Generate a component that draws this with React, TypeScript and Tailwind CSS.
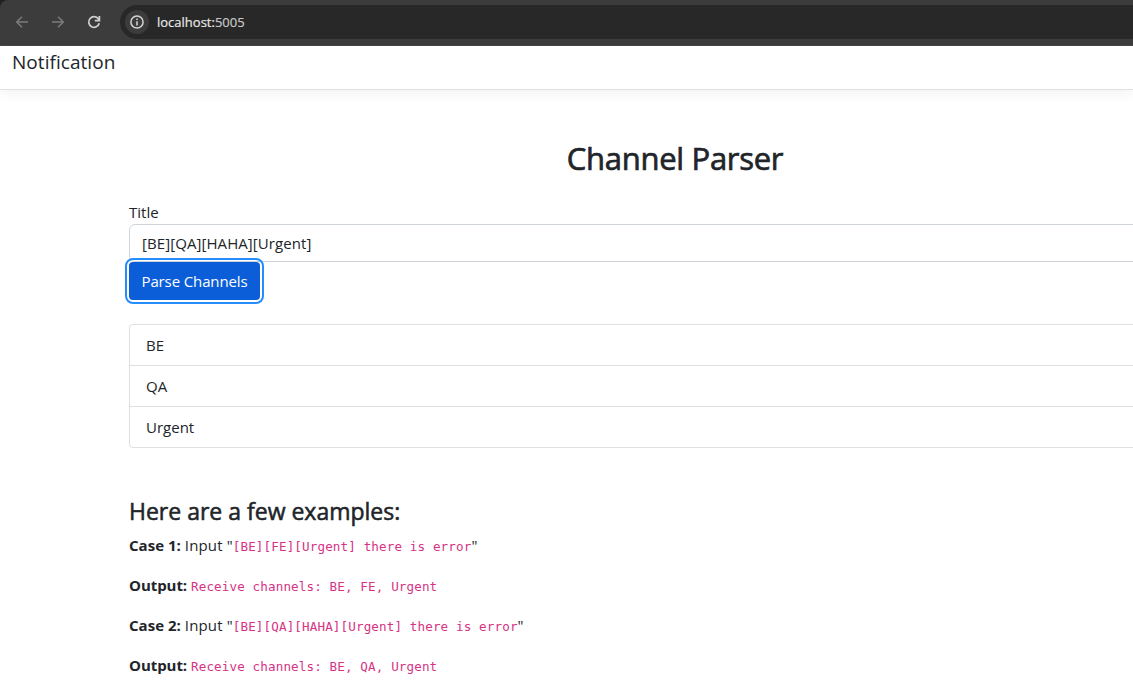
import React from "react";

const channels = ["BE", "QA", "Urgent"];

const examples = [
  { id: 1, input: "[BE][FE][Urgent] there is error", output: "Receive channels: BE, FE, Urgent" },
  { id: 2, input: "[BE][QA][HAHA][Urgent] there is error", output: "Receive channels: BE, QA, Urgent" },
];

function Code({ children }: { children: React.ReactNode }) {
  return (
    <code className="font-['DejaVu_Sans_Mono',monospace] text-[12.6px] leading-none tracking-[0.115px] text-[#d63384]">{children}</code>
  );
}

function BrowserBar() {
  return (
    <div className="bg-[#202020]">
      <div className="flex h-[46px] items-center rounded-tl-lg border-b border-[#474747] bg-[#3c3c3c] pb-px">
        <svg className="ml-[15px] size-[14px] shrink-0 text-[#7b7b7b]" viewBox="0 0 14 14" fill="none" stroke="currentColor" strokeWidth="1.5">
          <path d="M13 7H2M7 1.7 1.7 7 7 12.3" />
        </svg>
        <svg className="ml-[22px] size-[14px] shrink-0 text-[#7b7b7b]" viewBox="0 0 14 14" fill="none" stroke="currentColor" strokeWidth="1.5">
          <path d="M1 7h11M7 1.7 12.3 7 7 12.3" />
        </svg>
        <svg className="ml-[22px] size-[14px] shrink-0 text-[#cfcfcf]" viewBox="0 0 14 14" fill="none" stroke="currentColor" strokeWidth="1.7">
          <path d="M12.2 8.2A5.3 5.3 0 1 1 11.4 4L12.2 5.2M12.4 1v4.7H7.8" />
        </svg>
        <div className="ml-[19px] flex h-[34px] flex-1 items-center rounded-l-full bg-[#282828] pl-[5px]">
          <span className="flex size-6 items-center justify-center rounded-full bg-[#3c3c3c]">
            <svg className="size-[14px] text-[#d5d5d5]" viewBox="0 0 14 14" fill="none" stroke="currentColor" strokeWidth="1.5">
              <circle cx="7" cy="7" r="6.1" />
              <path d="M7 6.2v4.2M7 3.5v1.6" />
            </svg>
          </span>
          <span className="ml-2 text-[13px] text-[#e6e6e6] [-webkit-text-stroke:0.2px]">
            localhost:<span className="text-[#c7c7c7]">5005</span>
          </span>
        </div>
      </div>
    </div>
  );
}

export default function App() {
  return (
    <div className="h-[684px] w-full overflow-hidden bg-white font-['Open_Sans','Noto_Sans',sans-serif] text-[15px] leading-6 text-[#212529]">
      <BrowserBar />
      <nav className="flex h-11 items-start border-b border-[#dee2e6] pl-3 shadow-[0_4px_12px_rgba(0,0,0,0.05)]">
        <span className="text-[19px] leading-8 tracking-[0.05px]">Notification</span>
      </nav>
      <main className="ml-[129px] w-[1092px] pt-[49px]">
        <h1 className="text-center text-[31px] leading-[38px] tracking-[-0.3px] [-webkit-text-stroke:0.7px]">Channel Parser</h1>
        <label htmlFor="title" className="mt-[23px] block w-fit">Title</label>
        <input
          id="title"
          defaultValue="[BE][QA][HAHA][Urgent]"
          className="block h-[38px] w-full rounded-md border border-[#ced4da] px-3 tracking-[0.08px] outline-none"
        />
        <button className="relative block h-[38px] w-[131px] rounded-[4px] bg-[#0b5ed7] tracking-[-0.12px] text-white outline-2 outline-offset-2 outline-[#258cfb]">
          Parse Channels
        </button>
        <ul className="mt-6 divide-y divide-[#dfdfdf] rounded-[4px] border border-[#dfdfdf]">
          {channels.map((c) => (
            <li key={c} className="px-4 py-2">{c}</li>
          ))}
        </ul>
        <h2 className="mt-[49px] text-[23px] leading-[29px] [-webkit-text-stroke:0.55px]">Here are a few examples:</h2>
        <div className="mt-[7px] space-y-4">
          {examples.map((e) => (
            <React.Fragment key={e.id}>
              <p>
                <b className="tracking-[0.03px]">Case {e.id}:</b> <span className="tracking-[0.14px]">Input "</span>
                <Code>{e.input}</Code>"
              </p>
              <p>
                <b className="tracking-[-0.05px]">Output:</b> <Code>{e.output}</Code>
              </p>
            </React.Fragment>
          ))}
        </div>
      </main>
    </div>
  );
}
